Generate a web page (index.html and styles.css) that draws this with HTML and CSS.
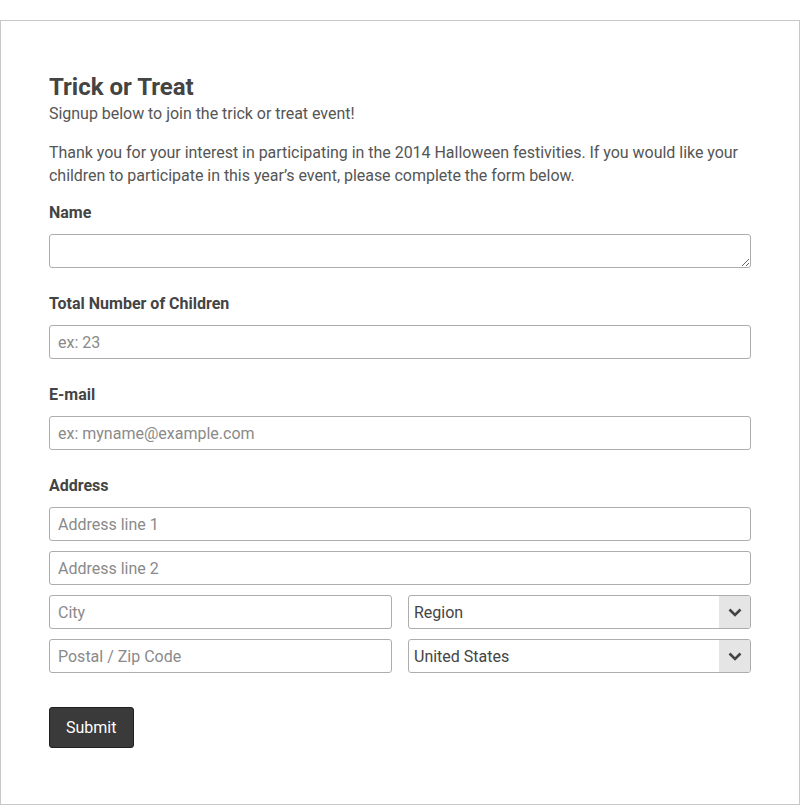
FILE: index.html
```html
<!DOCTYPE html>
<html lang="en">
<head>
  <meta charset="UTF-8">
  <meta name="viewport" content="width=device-width, initial-scale=1.0">
  <title>Trick or Treat</title>
  <link rel="stylesheet" href="styles.css">
</head>
<body>
  <!-- Signup form card -->
  <form class="form-card">
    <div class="form-header">
      <h1>Trick or Treat</h1>
      <p class="subtitle">Signup below to join the trick or treat event!</p>
    </div>

    <p class="intro">Thank you for your interest in participating in the 2014 Halloween festivities. If you would like your children to participate in this year’s event, please complete the form below.</p>

    <div class="field">
      <label>Name</label>
      <textarea class="input textarea"></textarea>
    </div>

    <div class="field">
      <label>Total Number of Children</label>
      <input class="input" type="text" placeholder="ex: 23">
    </div>

    <div class="field">
      <label>E-mail</label>
      <input class="input" type="text" placeholder="ex: myname@example.com">
    </div>

    <div class="field address">
      <label>Address</label>
      <input class="input" type="text" placeholder="Address line 1">
      <input class="input" type="text" placeholder="Address line 2">
      <div class="row">
        <input class="input" type="text" placeholder="City">
        <div class="select-wrap">
          <select class="input select">
            <option>Region</option>
          </select>
          <span class="arrow">
            <svg width="14" height="9" viewBox="0 0 14 9"><path d="M1.5 1.5 L7 7 L12.5 1.5" fill="none" stroke="#444" stroke-width="2.6"/></svg>
          </span>
        </div>
      </div>
      <div class="row">
        <input class="input" type="text" placeholder="Postal / Zip Code">
        <div class="select-wrap">
          <select class="input select">
            <option>United States</option>
          </select>
          <span class="arrow">
            <svg width="14" height="9" viewBox="0 0 14 9"><path d="M1.5 1.5 L7 7 L12.5 1.5" fill="none" stroke="#444" stroke-width="2.6"/></svg>
          </span>
        </div>
      </div>
    </div>

    <button type="button" class="submit">Submit</button>
  </form>
</body>
</html>
```

FILE: styles.css
```css
/* General Reset */
* {
  margin: 0;
  padding: 0;
  box-sizing: border-box;
}

body {
  font-family: Roboto, "Liberation Sans", sans-serif;
  color: #555;
  background: #fff;
  padding-top: 20px;
}

/* Card */
.form-card {
  border: 1px solid #c8c8c8;
  min-height: 785px;
  padding: 52px 48px 55px;
}

h1 {
  font-size: 24px;
  line-height: 29px;
  font-weight: 700;
  color: #444;
}

.subtitle,
.intro {
  font-size: 16px;
  line-height: 23px;
  letter-spacing: -0.03px;
}

.intro {
  margin-top: 16px;
  margin-bottom: 14px;
}

/* Fields */
.field {
  display: flex;
  flex-direction: column;
  gap: 10px;
  margin-bottom: 24px;
}

.field label {
  font-size: 16px;
  line-height: 23px;
  font-weight: 700;
  color: #444;
}

.input {
  width: 100%;
  height: 34px;
  border: 1px solid #adadad;
  border-radius: 3px;
  padding: 0 8px;
  font-family: Roboto, "Liberation Sans", sans-serif;
  font-size: 16px;
  color: #444;
  background: #fff;
  outline: none;
}

.input::placeholder {
  color: #8a8a8a;
}

.textarea {
  display: block;
  resize: vertical;
  padding: 6px 8px;
}

.address .row {
  display: grid;
  grid-template-columns: 1fr 1fr;
  gap: 16px;
}

/* Select with grey arrow box */
.select-wrap {
  position: relative;
}

.select {
  appearance: none;
  padding-left: 5px;
  padding-right: 40px;
}

.select-wrap .arrow {
  position: absolute;
  top: 1px;
  right: 1px;
  bottom: 1px;
  width: 31px;
  background: #e5e5e5;
  border-radius: 0 2px 2px 0;
  display: flex;
  align-items: center;
  justify-content: center;
  pointer-events: none;
}

/* Submit */
.submit {
  margin-top: 10px;
  background: #3a3a3a;
  color: #fff;
  border: 1px solid #1f1f1f;
  border-radius: 3px;
  padding: 10px 17px 10px 16px;
  font-family: Roboto, "Liberation Sans", sans-serif;
  font-size: 16px;
  line-height: 19px;
  cursor: pointer;
}
```
